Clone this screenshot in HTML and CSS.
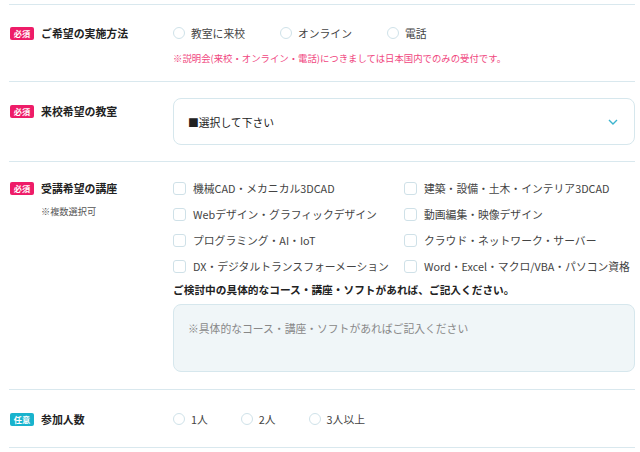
FILE: index.html
```html
<!DOCTYPE html>
<html lang="ja">
<head>
<meta charset="utf-8">
<link rel="stylesheet" href="styles.css">
</head>
<body>
<div class="form">
  <div class="row row-method">
    <div class="label"><span class="badge req">必須</span><span class="ltext">ご希望の実施方法</span></div>
    <div class="field">
      <div class="radios">
        <label class="opt"><span class="radio"></span>教室に来校</label>
        <label class="opt"><span class="radio"></span>オンライン</label>
        <label class="opt"><span class="radio"></span>電話</label>
      </div>
      <p class="note">※説明会(来校・オンライン・電話)につきましては日本国内でのみの受付です。</p>
    </div>
  </div>

  <div class="row row-room">
    <div class="label label-offset"><span class="badge req">必須</span><span class="ltext">来校希望の教室</span></div>
    <div class="field">
      <div class="select">
        <span>■選択して下さい</span>
        <svg class="chev" width="10" height="6" viewBox="0 0 10 6"><path d="M1 1 L5 5 L9 1" fill="none" stroke="#3cb4cf" stroke-width="1.4"/></svg>
      </div>
    </div>
  </div>

  <div class="row row-course">
    <div class="label-col">
      <div class="label"><span class="badge req">必須</span><span class="ltext">受講希望の講座</span></div>
      <p class="sub">※複数選択可</p>
    </div>
    <div class="field">
      <div class="checks">
        <label class="opt"><span class="check"></span>機械CAD・メカニカル3DCAD</label>
        <label class="opt"><span class="check"></span>建築・設備・土木・インテリア3DCAD</label>
        <label class="opt"><span class="check"></span>Webデザイン・グラフィックデザイン</label>
        <label class="opt"><span class="check"></span>動画編集・映像デザイン</label>
        <label class="opt"><span class="check"></span>プログラミング・AI・IoT</label>
        <label class="opt"><span class="check"></span>クラウド・ネットワーク・サーバー</label>
        <label class="opt"><span class="check"></span>DX・デジタルトランスフォーメーション</label>
        <label class="opt"><span class="check"></span>Word・Excel・マクロ/VBA・パソコン資格</label>
      </div>
      <p class="ask">ご検討中の具体的なコース・講座・ソフトがあれば、ご記入ください。</p>
      <div class="textarea">※具体的なコース・講座・ソフトがあればご記入ください</div>
    </div>
  </div>

  <div class="row row-count">
    <div class="label"><span class="badge opt-badge">任意</span><span class="ltext">参加人数</span></div>
    <div class="field">
      <div class="radios radios-count">
        <label class="opt"><span class="radio"></span>1人</label>
        <label class="opt"><span class="radio"></span>2人</label>
        <label class="opt"><span class="radio"></span>3人以上</label>
      </div>
    </div>
  </div>
  <div class="end"></div>
</div>
</body>
</html>
```
FILE: styles.css
```css
* { box-sizing: border-box; }
html, body { margin: 0; padding: 0; background: #fff; }
body {
  font-family: "Noto Sans CJK JP", "Noto Sans", sans-serif;
  color: #333;
  font-size: 10.8px;
}
.form {
  margin: 4px 5px 0 9px;
}
.row {
  display: grid;
  grid-template-columns: 164px 1fr;
  border-top: 1px solid #d9e8ee;
}
.end { border-top: 1px solid #d9e8ee; }
.label {
  display: flex;
  align-items: center;
  height: 16px;
  gap: 7px;
  padding-left: 1px;
}
.badge {
  display: inline-flex;
  align-items: center;
  justify-content: center;
  width: 24px;
  height: 13px;
  border-radius: 2px;
  color: #fff;
  font-size: 8.2px;
  font-weight: 700;
  line-height: 1;
}
.badge.req { background: #ee1c68; }
.badge.opt-badge { background: #19b3cd; }
.ltext {
  font-weight: 700;
  font-size: 10.9px;
  color: #222;
}
.field { min-width: 0; }
.radios {
  display: flex;
  gap: 35px;
  height: 16px;
  align-items: center;
}
.radios-count { gap: 33px; }
.opt {
  display: flex;
  align-items: center;
  gap: 6px;
  color: #444;
  line-height: 16px;
  white-space: nowrap;
}
.radio {
  width: 12px;
  height: 12px;
  border-radius: 50%;
  border: 1px solid #cfe2e9;
  background: #fff;
  flex: none;
}
.check {
  width: 13px;
  height: 13px;
  border-radius: 3px;
  border: 1px solid #cfe1e8;
  background: #fff;
  flex: none;
  margin-right: 1px;
}
.row-method { padding: 20px 0 16px; }
.note {
  margin: 10px 0 0;
  font-size: 9.4px;
  line-height: 14px;
  color: #f0467e;
}
.row-room { padding: 16px 0 16px; }
.label-offset { margin-top: 5px; }
.select {
  height: 47px;
  border: 1px solid #d6e7ed;
  border-radius: 8px;
  display: flex;
  align-items: center;
  justify-content: space-between;
  padding: 0 16px 0 14px;
  color: #222;
}
.row-course { padding: 18px 0 17px; }
.sub {
  margin: 8px 0 0 32px;
  font-size: 9.2px;
  line-height: 14px;
  color: #555;
}
.checks {
  display: grid;
  grid-template-columns: 231px 1fr;
  row-gap: 10px;
}
.ask {
  margin: 8px 0 0;
  font-weight: 700;
  font-size: 10.7px;
  line-height: 16px;
  color: #222;
}
.textarea {
  margin-top: 6px;
  height: 68px;
  background: #f0f6f8;
  border: 1px solid #d6e7ed;
  border-radius: 8px;
  padding: 15px 14px;
  color: #888;
  line-height: 16px;
}
.row-count { padding: 21px 0 20px; }
```
